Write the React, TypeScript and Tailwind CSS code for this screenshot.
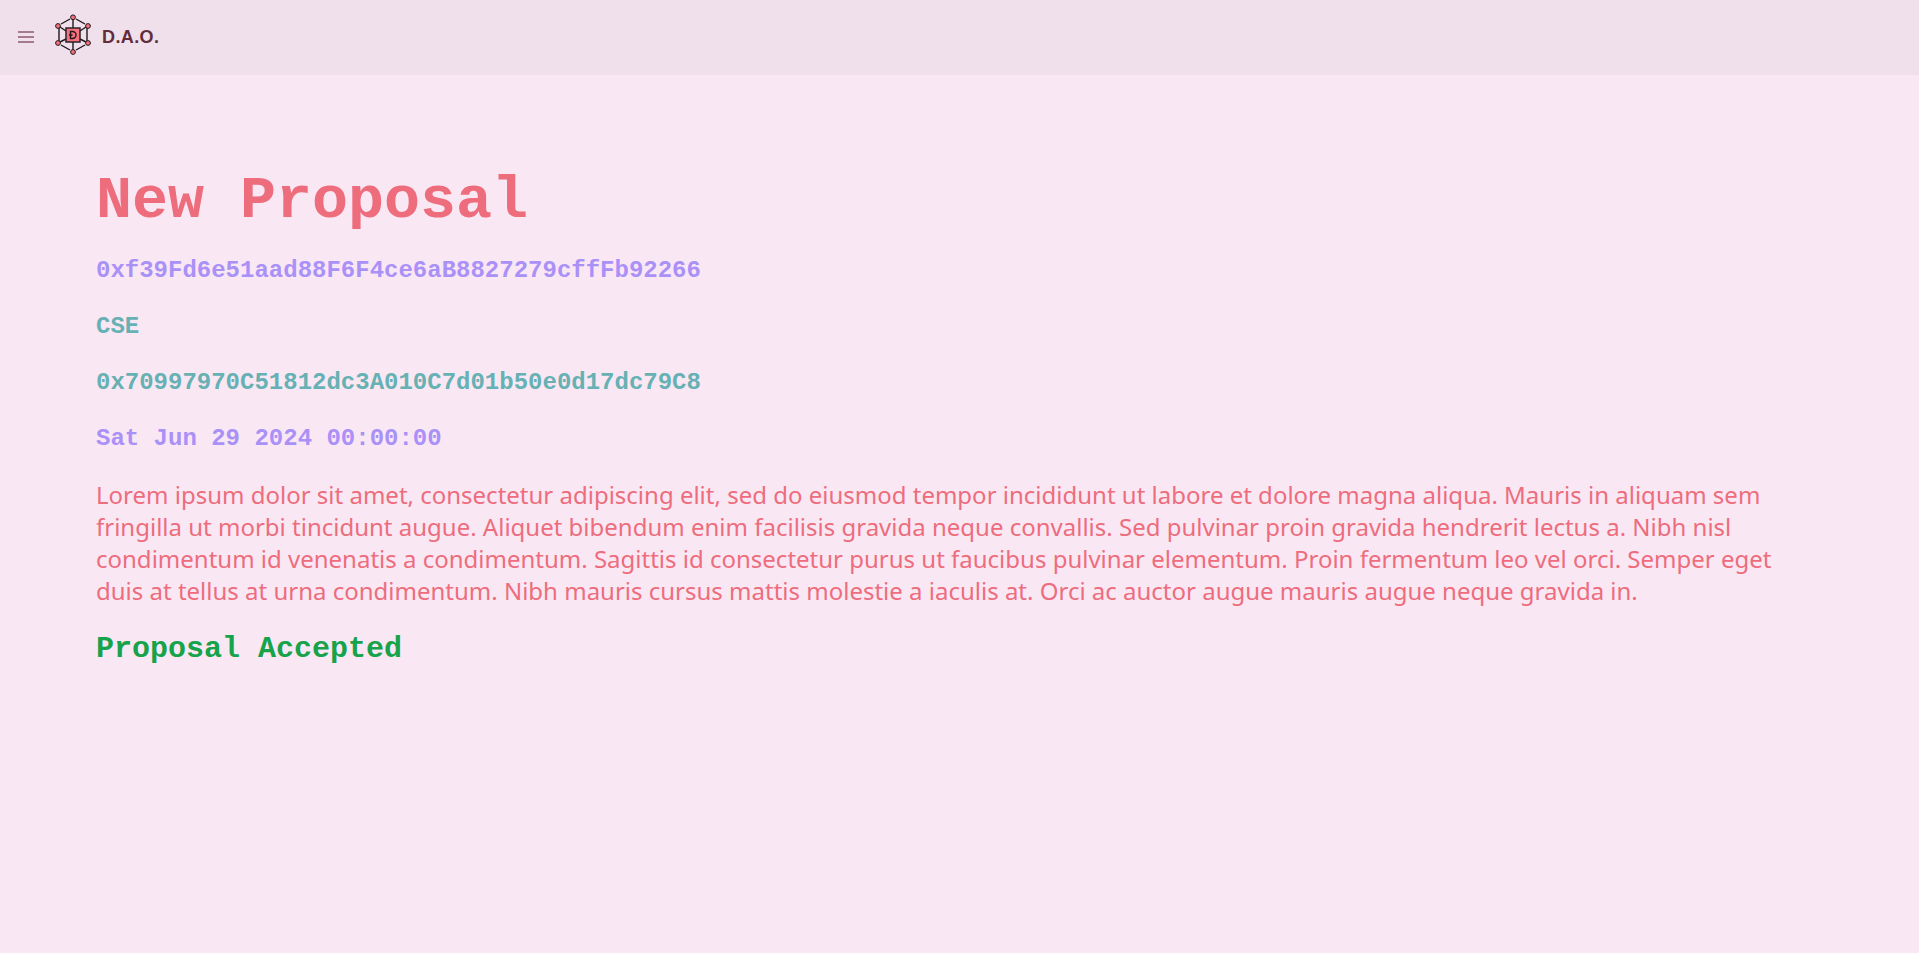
import React from 'react';

const Logo: React.FC = () => (
    <svg viewBox="0 0 42 42" className="w-[42px] h-[42px] mb-[5px]" fill="none">
        <g stroke="#1f1a1c" strokeWidth="1.4">
            <path d="M9 10 L18 5 M24 5 L33 10" />
            <path d="M7 14 V27 M35 14 V27" />
            <path d="M9 31 L18 36 M24 36 L33 31" />
            <path d="M21 5 V14 M21 28 V36" />
            <path d="M8 13 L14 17 M34 13 L28 17 M8 28 L14 25 M34 28 L28 25" />
        </g>
        <rect x="14" y="14" width="14" height="14" fill="#f9707f" stroke="#2a2225" strokeWidth="1.5" />
        <path d="M18.5 17.5 h2 a3.5 3.5 0 0 1 0 7 h-2 z M17 21 h3.5" stroke="#1f1a1c" strokeWidth="1.4" />
        {[[21, 3.3], [6, 12], [36, 12], [6, 29], [36, 29], [21, 38]].map(([cx, cy], i) => (
            <circle key={i} cx={cx} cy={cy} r="2.4" fill="#f9707f" stroke="#1f1a1c" strokeWidth="1" />
        ))}
    </svg>
);

const Navbar: React.FC = () => (
    <header className="h-[75px] bg-[#f0e0eb] flex items-center pl-[18px]">
        <svg viewBox="0 0 16 12" className="w-4 h-3 mb-[1px]" fill="none" stroke="#8a5a70" strokeWidth="1.5">
            <path d="M0 1 H16 M0 6 H16 M0 11 H16" />
        </svg>
        <div className="ml-[18px]">
            <Logo />
        </div>
        <span className="ml-2 mb-[1px] text-lg font-bold tracking-[0.4px] text-[#632c3b] font-['Liberation_Sans',sans-serif]">D.A.O.</span>
    </header>
);

const App: React.FC = () => (
    <div className="min-h-screen bg-[#fae7f4]">
        <Navbar />
        <main className="p-24 flex flex-col gap-6 font-mono">
            <h1 className="text-6xl font-bold text-[#ed6d7d]">New Proposal</h1>
            <p className="text-2xl font-bold text-[#a991f7]">0xf39Fd6e51aad88F6F4ce6aB8827279cffFb92266</p>
            <p className="text-2xl font-bold text-[#66b1b3]">CSE</p>
            <p className="text-2xl font-bold text-[#66b1b3]">0x70997970C51812dc3A010C7d01b50e0d17dc79C8</p>
            <p className="text-2xl font-bold text-[#a991f7]">Sat Jun 29 2024 00:00:00</p>
            <p className="text-2xl text-[#ed6d7d] font-['Noto_Sans',sans-serif]">
                Lorem ipsum dolor sit amet, consectetur adipiscing elit, sed do eiusmod tempor incididunt ut labore et dolore magna aliqua. Mauris in aliquam sem fringilla ut morbi tincidunt augue. Aliquet bibendum enim facilisis gravida neque convallis. Sed pulvinar proin gravida hendrerit lectus a. Nibh nisl condimentum id venenatis a condimentum. Sagittis id consectetur purus ut faucibus pulvinar elementum. Proin fermentum leo vel orci. Semper eget duis at tellus at urna condimentum. Nibh mauris cursus mattis molestie a iaculis at. Orci ac auctor augue mauris augue neque gravida in.
            </p>
            <p className="text-3xl font-bold text-[#16a34a]">Proposal Accepted</p>
        </main>
    </div>
);

export default App;
